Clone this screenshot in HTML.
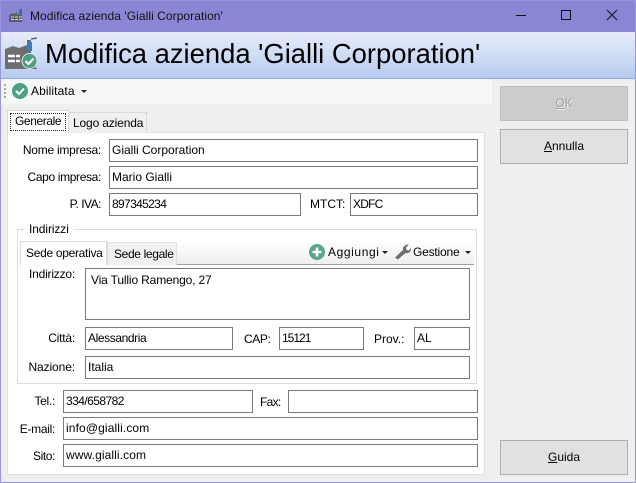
<!DOCTYPE html>
<html><head><meta charset="utf-8">
<style>
html,body{margin:0;padding:0}
body{width:636px;height:483px;position:relative;overflow:hidden;background:#efefef;font-family:"Liberation Sans",sans-serif;font-size:12px;color:#000}
div,span.a{position:absolute;box-sizing:border-box}
.i{background:#fff;border:1px solid #7a7a7a;padding:2px 0 0 2px;height:23px;line-height:16px;white-space:nowrap}
.l{text-align:right;white-space:nowrap;line-height:16px;height:16px}
.b{left:500px;width:128px;height:35px;background:#e1e1e1;border:1px solid #adadad;text-align:center;line-height:32px}
u{text-decoration:underline}
.t{white-space:nowrap;line-height:16px}
</style></head><body>
<div style="left:0;top:0;width:636px;height:32px;background:#8b85d6"></div>
<svg style="position:absolute;left:9px;top:7px" width="16" height="16" viewBox="0 0 16 16"><path d="M0 15V8l4-2 1 1 3-2v3l3-2V2h2v13z" fill="#5c5c64"/><rect x="10" y="3" width="3" height="5" fill="#3a6ea8"/><path d="M2 10h3M6 10h3M10 10h3M2 12.500h3M6 12.500h3M10 12.500h3" stroke="#ddd" stroke-width="1"/></svg>
<div class="t" style="left:30px;top:8px;color:#111;letter-spacing:.06px">Modifica azienda 'Gialli Corporation'</div>
<svg style="position:absolute;left:516px;top:8px" width="110" height="16" viewBox="0 0 110 16"><path d="M0 7.500H10" stroke="#111"/><path d="M45.500 2.500h9v9h-9z" fill="none" stroke="#111"/><path d="M91 2l10 10M101 2L91 12" stroke="#111" fill="none"/></svg>
<div style="left:1px;top:32px;width:634px;height:47px;background:linear-gradient(#e6edfb,#b8cbee);border-bottom:1px solid #8ea6e0"></div>
<svg style="position:absolute;left:5px;top:36px" width="33" height="36" viewBox="0 0 33 36"><path d="M0 33V13l8-3 6 2 8-3v-5h4v20l6 9z" fill="#6e6e6e"/><rect x="22" y="6" width="5" height="9" fill="#3b7ec0"/><path d="M26 3l6-1" stroke="#666" stroke-width="1.500"/><path d="M3 20h7M11 20h4M3 25h7M11 25h4" stroke="#fff" stroke-width="2.500"/><circle cx="24.500" cy="25" r="7.500" fill="#4e9e80" stroke="#d8e4e8" stroke-width="1"/><path d="M20.500 25l3 3 5-5.500" fill="none" stroke="#fff" stroke-width="2"/></svg>
<div class="t" style="left:45px;top:38px;font-size:27.4px;line-height:32px;color:#000">Modifica azienda 'Gialli Corporation'</div>
<div style="left:1px;top:79px;width:491px;height:25px;background:#f5f6f8"></div>
<div style="left:4px;top:84px;width:2px;height:14px;background:repeating-linear-gradient(#a8a8a8 0 2px,transparent 2px 4px)"></div>
<svg style="position:absolute;left:12px;top:83px" width="16" height="16" viewBox="0 0 16 16"><circle cx="8" cy="8" r="8" fill="#4e9e80"/><path d="M4 8l3 3 5-5.500" fill="none" stroke="#fff" stroke-width="2"/></svg>
<div class="t" style="left:31px;top:83px;letter-spacing:.1px">Abilitata</div>
<div style="left:81px;top:90px;border:3px solid transparent;border-top:3px solid #222;border-bottom:0"></div>

<div style="left:7px;top:132px;width:478px;height:343px;background:#fff;border:1px solid #e0e0e0"></div>
<div style="left:68px;top:112px;width:79px;height:21px;background:#f0f0f0;border:1px solid #d9d9d9;border-bottom:0"></div>
<div class="t" style="left:73px;top:115px;letter-spacing:-.15px">Logo azienda</div>
<div style="left:7px;top:110px;width:62px;height:23px;background:#fff;border:1px solid #d9d9d9;border-bottom:0"></div>
<div class="t" style="left:10px;top:113px;width:56px;height:18px;border:1px dotted #222;padding-left:4px;line-height:14px;letter-spacing:-.4px">Generale</div>

<div class="l" style="right:535px;top:142px;letter-spacing:-.25px">Nome impresa:</div>
<div class="i" style="left:109px;top:139px;width:369px">Gialli Corporation</div>
<div class="l" style="right:535px;top:169px;letter-spacing:-.35px">Capo impresa:</div>
<div class="i" style="left:109px;top:166px;width:369px">Mario Gialli</div>
<div class="l" style="right:535px;top:196px;letter-spacing:-.5px">P. IVA:</div>
<div class="i" style="left:109px;top:193px;width:192px;letter-spacing:-.65px">897345234</div>
<div class="l" style="left:310px;top:196px">MTCT:</div>
<div class="i" style="left:350px;top:193px;width:128px;letter-spacing:-.8px">XDFC</div>

<div style="left:17px;top:229px;width:460px;height:155px;border:1px solid #dcdcdc"></div>
<div class="t" style="left:24px;top:221px;background:#fff;padding:0 5px;letter-spacing:-.1px">Indirizzi</div>
<div style="left:107px;top:241px;width:367px;height:24px;background:linear-gradient(#fff,#efefef);border-bottom:1px solid #a0a0a0"></div>
<div style="left:107px;top:242px;width:70px;height:23px;background:#f0f0f0;border:1px solid #e0e0e0;border-bottom:0"></div>
<div class="t" style="left:114px;top:246px;letter-spacing:-.35px">Sede legale</div>
<div style="left:20px;top:241px;width:87px;height:24px;background:#fff;border:1px solid #d9d9d9;border-bottom:0"></div>
<div class="t" style="left:26px;top:245px;letter-spacing:-.3px">Sede operativa</div>
<svg style="position:absolute;left:309px;top:244px" width="16" height="16" viewBox="0 0 16 16"><circle cx="8" cy="8" r="8" fill="#58a888"/><path d="M8 3.500v9M3.500 8h9" stroke="#fff" stroke-width="2.500"/></svg>
<div class="t" style="left:328px;top:244px;letter-spacing:.6px">Aggiungi</div>
<div style="left:382px;top:251px;border:3px solid transparent;border-top:3px solid #222;border-bottom:0"></div>
<svg style="position:absolute;left:394px;top:243px" width="17" height="17" viewBox="0 0 17 17"><path d="M1 14.500L9 7c-.5-3 2-6 6-5.500L12 4.500l.5 2.500 2.500.5 2-3c.5 4-2.500 6.500-5.500 5.500L4 16.500z" fill="#6e6e6e"/></svg>
<div class="t" style="left:413px;top:244px;letter-spacing:-.2px">Gestione</div>
<div style="left:465px;top:251px;border:3px solid transparent;border-top:3px solid #222;border-bottom:0"></div>

<div class="l" style="left:29px;top:266px;letter-spacing:-.2px">Indirizzo:</div>
<div class="i" style="left:85px;top:268px;width:385px;height:52px;padding:3px 0 0 5px;letter-spacing:-.15px">Via Tullio Ramengo, 27</div>
<div class="l" style="right:561px;top:330px;letter-spacing:-.2px">Città:</div>
<div class="i" style="left:85px;top:327px;width:148px;letter-spacing:-.4px">Alessandria</div>
<div class="l" style="left:244px;top:331px;letter-spacing:-.4px">CAP:</div>
<div class="i" style="left:279px;top:327px;width:85px;letter-spacing:-1px">15121</div>
<div class="l" style="left:374px;top:331px">Prov.:</div>
<div class="i" style="left:414px;top:327px;width:56px">AL</div>
<div class="l" style="right:561px;top:359px;letter-spacing:-.1px">Nazione:</div>
<div class="i" style="left:85px;top:356px;width:385px">Italia</div>

<div class="l" style="right:581px;top:393px;letter-spacing:-.3px">Tel.:</div>
<div class="i" style="left:63px;top:390px;width:190px;letter-spacing:-.55px">334/658782</div>
<div class="l" style="left:260px;top:394px;letter-spacing:-.7px">Fax:</div>
<div class="i" style="left:288px;top:390px;width:190px"></div>
<div class="l" style="right:581px;top:421px;letter-spacing:-.3px">E-mail:</div>
<div class="i" style="left:63px;top:417px;width:415px;letter-spacing:.12px">info@gialli.com</div>
<div class="l" style="right:581px;top:448px;letter-spacing:-.4px">Sito:</div>
<div class="i" style="left:63px;top:444px;width:415px;letter-spacing:.1px">www.gialli.com</div>

<div class="b" style="top:86px;background:#ccc;border-color:#bfbfbf;color:#a0a0a0;text-shadow:1px 1px 0 #eee"><u>O</u>K</div>
<div class="b" style="top:129px"><u>A</u>nnulla</div>
<div class="b" style="top:440px"><u>G</u>uida</div>
<div style="left:0;top:0;width:636px;height:483px;border:1px solid #9a94dc"></div>
</body></html>
